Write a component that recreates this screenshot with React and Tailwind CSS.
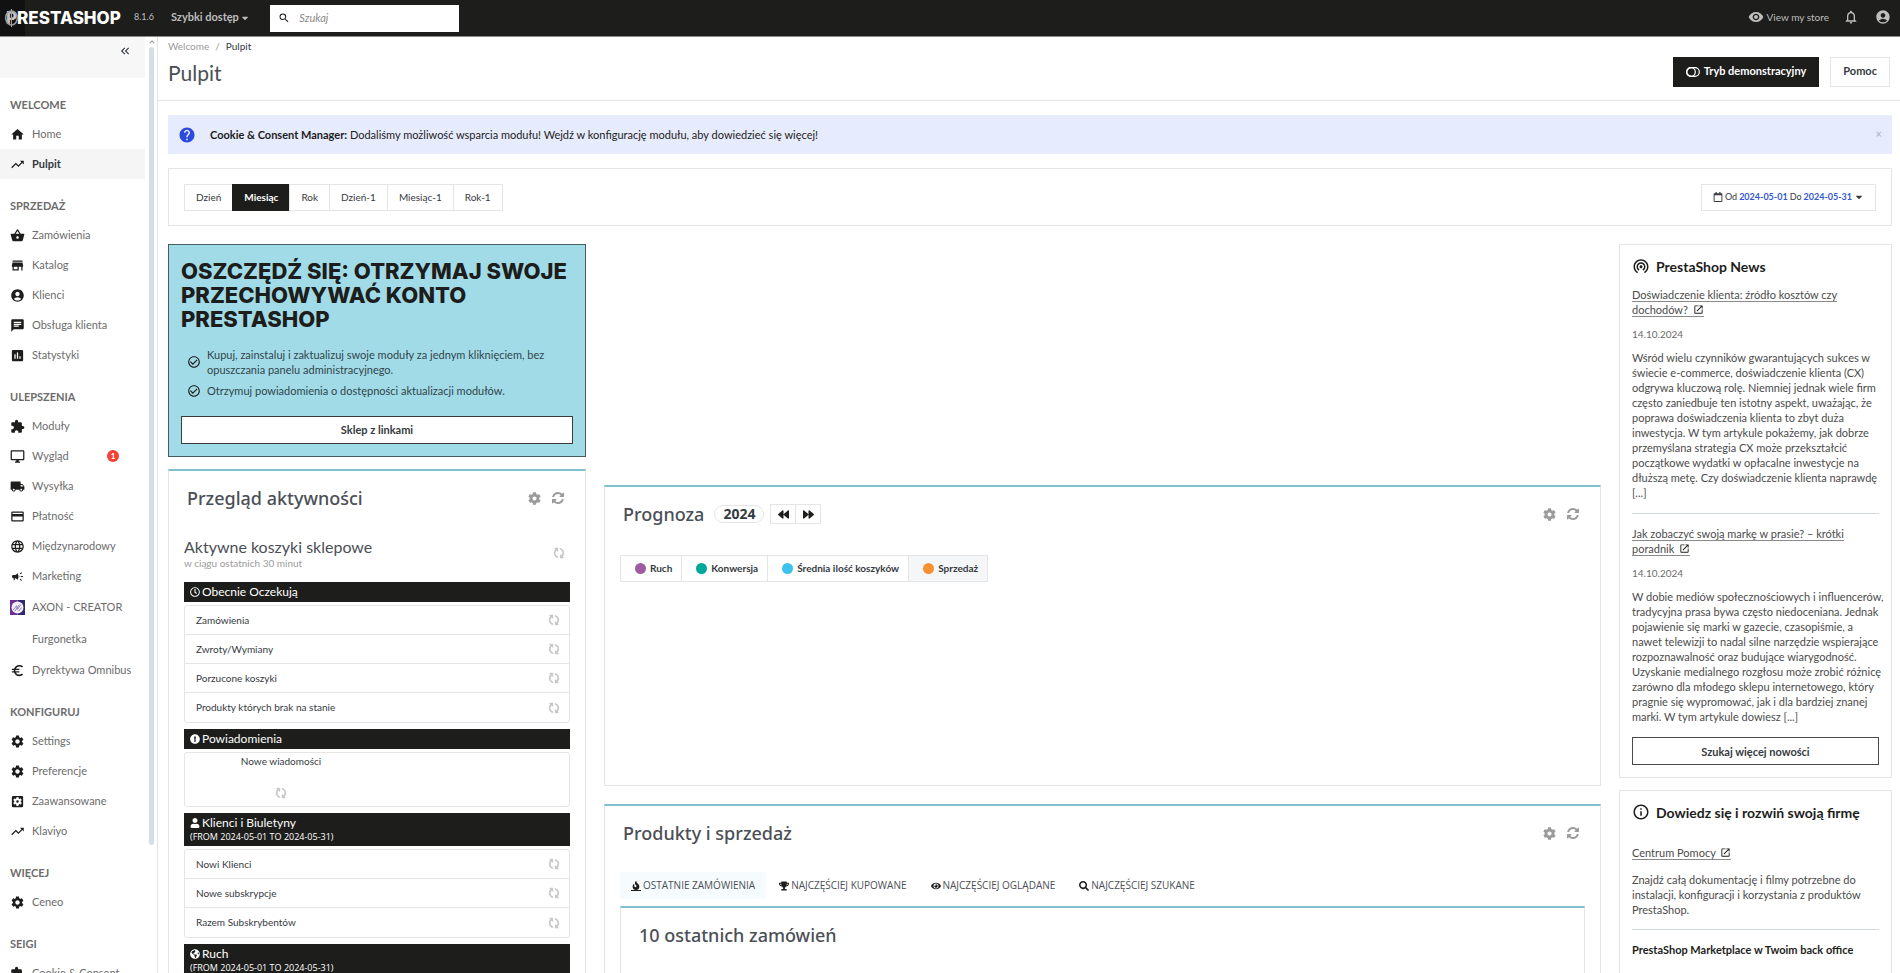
import React from 'react';
import {
  MdHome, MdTrendingUp, MdShoppingBasket, MdStore, MdAccountCircle, MdChat, MdAssessment,
  MdExtension, MdOutlineDesktopWindows, MdLocalShipping, MdPayment, MdLanguage, MdEuroSymbol,
  MdCampaign, MdSettings, MdSettingsApplications, MdRemoveRedEye, MdNotificationsNone, MdSearch,
  MdWifiTethering, MdOpenInNew, MdInfoOutline, MdCheckCircleOutline, MdHelp,
  MdKeyboardDoubleArrowLeft, MdKeyboardArrowUp,
} from 'react-icons/md';
import {
  FaCog, FaRegClock, FaExclamationCircle, FaUser, FaGlobeAmericas, FaFire, FaTrophy, FaEye,
  FaSearch, FaBackward, FaForward, FaCaretDown, FaRegCalendar,
} from 'react-icons/fa';

const menu = [
  { title: 'WELCOME', items: [
    { label: 'Home', icon: MdHome },
    { label: 'Pulpit', icon: MdTrendingUp, active: true },
  ] },
  { title: 'SPRZEDAŻ', items: [
    { label: 'Zamówienia', icon: MdShoppingBasket },
    { label: 'Katalog', icon: MdStore },
    { label: 'Klienci', icon: MdAccountCircle },
    { label: 'Obsługa klienta', icon: MdChat },
    { label: 'Statystyki', icon: MdAssessment },
  ] },
  { title: 'ULEPSZENIA', items: [
    { label: 'Moduły', icon: MdExtension },
    { label: 'Wygląd', icon: MdOutlineDesktopWindows, badge: 1 },
    { label: 'Wysyłka', icon: MdLocalShipping },
    { label: 'Płatność', icon: MdPayment },
    { label: 'Międzynarodowy', icon: MdLanguage },
    { label: 'Marketing', icon: MdCampaign, small: true },
    { label: 'AXON - CREATOR', icon: AxonIcon, tall: true },
    { label: 'Furgonetka', tall: true },
    { label: 'Dyrektywa Omnibus', icon: MdEuroSymbol },
  ] },
  { title: 'KONFIGURUJ', items: [
    { label: 'Settings', icon: MdSettings },
    { label: 'Preferencje', icon: MdSettings },
    { label: 'Zaawansowane', icon: MdSettingsApplications },
    { label: 'Klaviyo', icon: MdTrendingUp },
  ] },
  { title: 'WIĘCEJ', items: [{ label: 'Ceneo', icon: MdSettings }] },
  { title: 'SEIGI', items: [{ label: 'Cookie & Consent', icon: MdExtension }] },
];

const periods = ['Dzień', 'Miesiąc', 'Rok', 'Dzień-1', 'Miesiąc-1', 'Rok-1'];

const series = [
  { label: 'Ruch', dot: 'bg-[#9e5ba1]' },
  { label: 'Konwersja', dot: 'bg-[#00a89c]' },
  { label: 'Średnia ilość koszyków', dot: 'bg-[#3ac4ed]' },
  { label: 'Sprzedaż', dot: 'bg-[#f99031]', active: true },
];

const tabs = [
  { label: 'OSTATNIE ZAMÓWIENIA', icon: FaFire, active: true },
  { label: 'NAJCZĘŚCIEJ KUPOWANE', icon: FaTrophy },
  { label: 'NAJCZĘŚCIEJ OGLĄDANE', icon: FaEye },
  { label: 'NAJCZĘŚCIEJ SZUKANE', icon: FaSearch },
];

const news = [
  {
    title: 'Doświadczenie klienta: źródło kosztów czy dochodów?',
    date: '14.10.2024',
    text: 'Wśród wielu czynników gwarantujących sukces w świecie e-commerce, doświadczenie klienta (CX) odgrywa kluczową rolę. Niemniej jednak wiele firm często zaniedbuje ten istotny aspekt, uważając, że poprawa doświadczenia klienta to zbyt duża inwestycja. W tym artykule pokażemy, jak dobrze przemyślana strategia CX może przekształcić początkowe wydatki w opłacalne inwestycje na dłuższą metę. Czy doświadczenie klienta naprawdę [...]',
  },
  {
    title: 'Jak zobaczyć swoją markę w prasie? – krótki poradnik',
    date: '14.10.2024',
    text: 'W dobie mediów społecznościowych i influencerów, tradycyjna prasa bywa często niedoceniana. Jednak pojawienie się marki w gazecie, czasopiśmie, a nawet\u00a0telewizji to nadal silne narzędzie wspierające rozpoznawalność oraz budujące wiarygodność. Uzyskanie medialnego rozgłosu może zrobić różnicę zarówno dla młodego sklepu internetowego, który pragnie się wypromować, jak i dla bardziej znanej marki. W tym artykule dowiesz [...]',
  },
];

function AxonIcon({ className }) {
  return (
    <svg viewBox="0 0 16 16" className={className}>
      <rect width="8" height="16" fill="#6b2f94" />
      <rect x="8" width="8" height="16" fill="#2d2a72" />
      <circle cx="8" cy="8" r="6.4" fill="#f3effa" />
      <path d="M3.5 10.5 7 6l1 4 3.5-5M5 12l5-7M9 12l3.5-4" stroke="#8a7bb8" strokeWidth="1" fill="none" />
    </svg>
  );
}

function RefreshIcon({ className }) {
  return (
    <svg viewBox="0 0 1792 1792" className={className} fill="currentColor">
      <path d="M1639 1056q0 5-1 7-64 268-268 434.500t-478 166.500q-146 0-282.500-55t-243.500-157l-129 129q-19 19-45 19t-45-19-19-45v-448q0-26 19-45t45-19h448q26 0 45 19t19 45-19 45l-137 137q71 66 161 102t187 36q134 0 250-65t186-179q11-17 53-117 8-23 30-23h192q13 0 22.500 9.500t9.500 22.500zm25-800v448q0 26-19 45t-45 19h-448q-26 0-45-19t-19-45 19-45l138-138q-148-137-349-137-134 0-250 65t-186 179q-11 17-53 117-8 23-30 23h-199q-13 0-22.500-9.500t-9.500-22.500v-7q65-268 270-434.500t480-166.500q146 0 284 55.500t245 156.500l130-129q19-19 45-19t45 19 19 45z" />
    </svg>
  );
}

function Spinner() {
  return <RefreshIcon className="h-3 w-3 rotate-90 text-[#c8c8c8]" />;
}

function DemoIcon() {
  return (
    <svg viewBox="0 0 14 10" className="h-[10px] w-[14px]" fill="none" stroke="currentColor" strokeWidth="1.2">
      <rect x="0.7" y="0.7" width="12.6" height="8.6" rx="4.3" />
      <circle cx="5" cy="5" r="4.3" />
    </svg>
  );
}

function Header() {
  return (
    <header className="flex h-[37px] items-center border-b border-[#8a8a89] bg-[#1d1d1b] text-[#bebebe]">
      <div className="flex h-9 w-[25px] items-center bg-[#111111] pl-[6px]">
        <div className="relative whitespace-nowrap font-['Inter'] text-[17px] font-extrabold leading-none text-white">
          <span className="text-[#c4c4c4]">P</span>RESTASHOP
          <svg viewBox="0 0 14 20" className="absolute -left-px -top-[2px] h-5 w-[14px]" fill="none" stroke="#9d9d9c">
            <ellipse cx="6.5" cy="10" rx="5.8" ry="7" strokeWidth="1.5" />
            <path d="M6.5 1v18" strokeWidth="1" />
          </svg>
        </div>
      </div>
      <span className="ml-[109px] w-[18px] pb-[2px] text-[9px]">8.1.6</span>
      <button className="ml-[19px] flex w-[77px] items-center gap-[3px] whitespace-nowrap pb-px text-[11px] font-bold">
        Szybki dostęp <FaCaretDown className="h-[10px] w-[10px]" />
      </button>
      <div className="ml-[22px] flex h-[27px] w-[189px] items-center gap-[9px] bg-white px-2">
        <MdSearch className="h-[14px] w-[14px] text-[#1d1d1b]" />
        <input type="text" aria-label="Szukaj" placeholder="Szukaj" className="w-full min-w-0 text-[11px] italic outline-none placeholder:text-[#8a8a8a]" />
      </div>
      <div className="ml-auto flex items-center pb-[2px] pr-[9px]">
        <a href="#store" className="flex items-center gap-[3px] text-[10px]">
          <MdRemoveRedEye className="h-4 w-4" /> View my store
        </a>
        <button aria-label="Powiadomienia" className="ml-[14px]"><MdNotificationsNone className="h-4 w-4" /></button>
        <button aria-label="Konto" className="ml-4"><MdAccountCircle className="h-4 w-4" /></button>
      </div>
    </header>
  );
}

function Sidebar() {
  return (
    <nav className="flex w-[158px] shrink-0 border-r border-[#e5e5e5]">
      <div className="w-[145px]">
        <div className="flex h-[41px] justify-end bg-[#f7f7f7] pr-[13px] pt-[7px]">
          <button aria-label="Zwiń menu" className="h-[14px]"><MdKeyboardDoubleArrowLeft className="h-[14px] w-[14px]" /></button>
        </div>
        {menu.map((group) => (
          <section key={group.title}>
            <h2 className="h-[41px] pl-[10px] pt-[21px] text-[11px] font-bold leading-3 text-[#6c6c6c]">{group.title}</h2>
            {group.items.map(({ label, icon: Icon, active, badge, tall, small }) => (
              <a
                key={label}
                href="#menu"
                className={`flex items-center pl-[10px] text-[11px] ${tall ? 'h-8' : 'h-[30px]'} ${active ? 'bg-[#f5f5f5] font-bold text-[#363a41]' : 'text-[#6c6c6c]'}`}
              >
                <span className="flex w-[22px]">{Icon && <Icon className={`h-[15px] w-[15px] text-[#1d1d1b] ${small ? 'p-px' : ''}`} />}</span>
                <span className="whitespace-nowrap">{label}</span>
                {badge && (
                  <span className="ml-auto mr-[26px] flex h-3 w-3 items-center justify-center rounded-full bg-[#f44336] text-[8px] font-bold text-white">{badge}</span>
                )}
              </a>
            ))}
          </section>
        ))}
      </div>
      <div className="ml-1 flex w-[5px] flex-col items-center">
        <MdKeyboardArrowUp className="h-[10px] w-[10px] shrink-0 text-[#8a8a8a]" />
        <div className="h-[798px] w-[5px] rounded-full bg-[#d3dfe6]" />
      </div>
    </nav>
  );
}

function PanelTitle({ children }) {
  return (
    <div className="flex items-center pb-px pl-[3px] pr-[5px] pt-[15px]">
      <h3 className="font-['Noto_Sans'] text-[18px] font-medium leading-6 text-[#4b4f56]">{children}</h3>
      <div className="ml-auto flex items-center gap-[10px] text-[#9b9b9b]">
        <button aria-label="Ustawienia"><FaCog className="h-[13px] w-[13px]" /></button>
        <button aria-label="Odśwież"><RefreshIcon className="h-[14px] w-[14px]" /></button>
      </div>
    </div>
  );
}

function ListHeader({ icon: Icon, title, range }) {
  return (
    <header className="mt-[6px] bg-[#1d1d1b] px-[6px] py-[3px] text-white">
      <h4 className="flex items-center gap-[2px] text-[12px] leading-[14px]"><Icon className="h-[10px] w-[10px]" /> {title}</h4>
      {range && <p className="font-['Open_Sans'] text-[9px] leading-[13px]">{range}</p>}
    </header>
  );
}

function List({ rows }) {
  return (
    <ul className="mt-[3px] rounded-[3px] border border-[#e5e5e5]">
      {rows.map((row) => (
        <li key={row} className="flex h-[29px] items-center justify-between border-b border-[#e5e5e5] pl-[11px] pr-[9px] text-[10px] text-[#363a41] last:border-b-0">
          {row} <Spinner />
        </li>
      ))}
    </ul>
  );
}

function AccountCard() {
  return (
    <section className="border border-[#4b5c60] bg-[#a2dbe8] p-3 text-[#1d1d1b]">
      <h2 className="pt-[2px] font-['Inter'] text-[22px] font-extrabold leading-6">
        OSZCZĘDŹ SIĘ: OTRZYMAJ SWOJE PRZECHOWYWAĆ KONTO PRESTASHOP
      </h2>
      <ul className="mt-4 flex flex-col gap-[6px] pl-[6px] text-[11px] leading-[15px] text-[#2f4549]">
        <li className="flex items-center gap-[6px]">
          <MdCheckCircleOutline className="h-[14px] w-[14px] shrink-0 text-[#1d1d1b]" />
          <span>Kupuj, zainstaluj i zaktualizuj swoje moduły za jednym kliknięciem, bez opuszczania panelu administracyjnego.</span>
        </li>
        <li className="flex items-center gap-[6px]">
          <MdCheckCircleOutline className="h-[14px] w-[14px] shrink-0 text-[#1d1d1b]" />
          <span>Otrzymuj powiadomienia o dostępności aktualizacji modułów.</span>
        </li>
      </ul>
      <button className="mt-[18px] h-7 w-full border border-[#3c3c3a] bg-white text-[11px] font-bold text-[#363a41]">Sklep z linkami</button>
    </section>
  );
}

function ActivityPanel() {
  return (
    <section className="mt-3 border border-t-2 border-[#e5e5e5] border-t-[#7fc1cd] px-[15px] pb-4">
      <PanelTitle>Przegląd aktywności</PanelTitle>
      <div className="mb-[13px] mt-[26px] flex items-center justify-between pr-[5px]">
        <div>
          <h4 className="text-[16px] leading-5 text-[#4b4f56]">Aktywne koszyki sklepowe</h4>
          <p className="text-[10px] leading-3 text-[#9b9b9b]">w ciągu ostatnich 30 minut</p>
        </div>
        <Spinner />
      </div>
      <ListHeader icon={FaRegClock} title="Obecnie Oczekują" />
      <List rows={['Zamówienia', 'Zwroty/Wymiany', 'Porzucone koszyki', 'Produkty których brak na stanie']} />
      <ListHeader icon={FaExclamationCircle} title="Powiadomienia" />
      <div className="mt-[3px] h-[55px] rounded-[3px] border border-[#e5e5e5] pt-[2px]">
        <div className="flex w-1/2 flex-col items-center gap-[20px] text-[10px] leading-3 text-[#363a41]">
          Nowe wiadomości <Spinner />
        </div>
      </div>
      <ListHeader icon={FaUser} title="Klienci i Biuletyny" range="(FROM 2024-05-01 TO 2024-05-31)" />
      <List rows={['Nowi Klienci', 'Nowe subskrypcje', 'Razem Subskrybentów']} />
      <ListHeader icon={FaGlobeAmericas} title="Ruch" range="(FROM 2024-05-01 TO 2024-05-31)" />
    </section>
  );
}

function ForecastPanel() {
  return (
    <section className="mt-[241px] h-[301px] border border-t-2 border-[#e5e5e5] border-t-[#7fc1cd] px-[15px]">
      <PanelTitle>
        <span className="flex items-center">
          Prognoza
          <span className="ml-[10px] rounded-full border border-[#e5e5e5] px-2 text-[14px] font-bold leading-4 text-[#363a41]">2024</span>
          <span className="ml-[6px] flex text-[#1d1d1b]">
            <button aria-label="Poprzedni rok" className="flex h-5 w-[26px] items-center justify-center border border-[#e5e5e5]"><FaBackward className="h-[11px] w-[11px]" /></button>
            <button aria-label="Następny rok" className="-ml-px flex h-5 w-[26px] items-center justify-center border border-[#e5e5e5]"><FaForward className="h-[11px] w-[11px]" /></button>
          </span>
        </span>
      </PanelTitle>
      <div className="mt-7 flex">
        {series.map(({ label, dot, active }) => (
          <button key={label} className={`-mr-px flex h-[27px] items-center gap-1 border border-[#e5e5e5] pl-[14px] pr-[9px] text-[10px] font-bold text-[#363a41] ${active ? 'bg-[#f5f6f7]' : ''}`}>
            <span className={`h-[11px] w-[11px] rounded-full ${dot}`} /> {label}
          </button>
        ))}
      </div>
    </section>
  );
}

function ProductsPanel() {
  return (
    <section className="mt-[18px] border border-t-2 border-[#e5e5e5] border-t-[#7fc1cd] px-[15px] pb-4">
      <PanelTitle>Produkty i sprzedaż</PanelTitle>
      <div className="mt-[26px] flex gap-[2px]">
        {tabs.map(({ label, icon: Icon, active }) => (
          <a key={label} href="#tab" className={`flex h-[27px] items-center gap-[2px] px-[11px] font-['Open_Sans'] text-[10px] text-[#4b4f56] ${active ? 'bg-[#f6fbfd]' : ''}`}>
            <Icon className={`h-[10px] w-[10px] text-[#1d1d1b] ${active ? 'border-b border-[#1d1d1b]' : ''}`} /> {label}
          </a>
        ))}
      </div>
      <div className="mt-[7px] h-40 border border-t-2 border-[#e5e5e5] border-t-[#7fc1cd] px-[18px] pt-[15px]">
        <h3 className="font-['Noto_Sans'] text-[18px] font-medium leading-6 text-[#4b4f56]">10 ostatnich zamówień</h3>
      </div>
    </section>
  );
}

function ExternalLink({ children }) {
  return (
    <a href="#link" className="border-b border-[#8a8a8a] text-[#4b4b4b]">
      {children} <MdOpenInNew className="ml-[2px] inline h-[11px] w-[11px] align-[-1px] text-[#1d1d1b]" />
    </a>
  );
}

function NewsColumn() {
  return (
    <aside className="w-[273px] shrink-0 text-[11px] leading-[15px] text-[#4b4b4b]">
      <section className="border border-[#e5e5e5] p-3">
        <h2 className="flex h-[18px] items-center gap-[6px] text-[14px] font-bold text-[#1d1d1b]">
          <MdWifiTethering className="h-[18px] w-[18px]" /> PrestaShop News
        </h2>
        {news.map((item, index) => (
          <article key={item.title} className={index ? 'mt-[13px] border-t border-[#d3dbdf] pt-3' : 'mt-3'}>
            <h3><ExternalLink>{item.title}</ExternalLink></h3>
            <p className="mt-[10px] text-[10px] text-[#6c6c6c]">{item.date}</p>
            <p className="-mr-2 mt-2">{item.text}</p>
          </article>
        ))}
        <button className="mt-[13px] h-7 w-full border border-[#4b4b4b] font-bold text-[#363a41]">Szukaj więcej nowości</button>
      </section>
      <section className="mt-3 border border-[#e5e5e5] px-3 pb-10 pt-3">
        <h2 className="flex h-[18px] items-center gap-[6px] text-[14px] font-bold text-[#1d1d1b]">
          <MdInfoOutline className="h-[18px] w-[18px]" /> Dowiedz się i rozwiń swoją firmę
        </h2>
        <h3 className="mt-6"><ExternalLink>Centrum Pomocy</ExternalLink></h3>
        <p className="mt-3 border-b border-[#d3dbdf] pb-3">
          Znajdź całą dokumentację i filmy potrzebne do instalacji, konfiguracji i korzystania z produktów PrestaShop.
        </p>
        <h3 className="mt-3 font-bold text-[#1d1d1b]">PrestaShop Marketplace w Twoim back office</h3>
      </section>
    </aside>
  );
}

export default function App() {
  return (
    <div className="h-screen overflow-hidden bg-white font-['Lato',sans-serif] text-[#363a41]">
      <Header />
      <div className="flex">
        <Sidebar />
        <main className="min-w-0 flex-1">
          <div className="flex h-[64px] items-center justify-between border-b border-[#e5e5e5] px-[10px]">
            <div className="self-start pt-[2px]">
              <nav className="flex gap-[6px] text-[10px] leading-[14px] text-[#9b9b9b]">
                <a href="#welcome">Welcome</a> <span>/</span> <span className="text-[#363a41]">Pulpit</span>
              </nav>
              <h1 className="mt-[6px] text-[21px] leading-7 text-[#4b4f56]">Pulpit</h1>
            </div>
            <div className="flex gap-[11px] pt-[6px]">
              <button className="flex h-[30px] items-center gap-1 bg-[#1d1d1b] px-[13px] text-[11px] font-bold text-white"><DemoIcon /> Tryb demonstracyjny</button>
              <button className="h-[30px] border border-[#e5e5e5] px-3 text-[11px] font-bold">Pomoc</button>
            </div>
          </div>
          <div className="pl-[10px] pr-2 pt-[14px]">
            <div className="flex h-[39px] items-center bg-[#e6ebfd] px-[10px] text-[11px] text-[#1d1d1b]">
              <MdHelp className="h-[18px] w-[18px] text-[#2a4bdb]" />
              <p className="ml-[14px] pt-px"><strong className="font-bold">Cookie &amp; Consent Manager:</strong> Dodaliśmy możliwość wsparcia modułu! Wejdź w konfigurację modułu, aby dowiedzieć się więcej!</p>
              <button aria-label="Zamknij" className="ml-auto text-[#a9aebf]">×</button>
            </div>
            <div className="mt-[14px] flex h-[58px] items-center justify-between border border-[#e5e5e5] px-[15px]">
              <div className="flex">
                {periods.map((label) => (
                  <button key={label} className={`-mr-px h-[27px] border px-[11px] text-[10px] ${label === 'Miesiąc' ? 'border-[#1d1d1b] bg-[#1d1d1b] font-bold text-white' : 'border-[#e5e5e5]'}`}>{label}</button>
                ))}
              </div>
              <button className="flex h-[27px] items-center gap-[2px] border border-[#e5e5e5] px-[11px] text-[9px]">
                <FaRegCalendar className="h-[10px] w-[10px]" /> Od <b className="text-[#3558cf]">2024-05-01</b> Do <b className="text-[#3558cf]">2024-05-31</b> <FaCaretDown className="h-[10px] w-[10px]" />
              </button>
            </div>
            <div className="mt-[18px] flex items-start gap-[18px]">
              <div className="w-[418px] shrink-0">
                <AccountCard />
                <ActivityPanel />
              </div>
              <div className="min-w-0 flex-1">
                <ForecastPanel />
                <ProductsPanel />
              </div>
              <NewsColumn />
            </div>
          </div>
        </main>
      </div>
    </div>
  );
}
